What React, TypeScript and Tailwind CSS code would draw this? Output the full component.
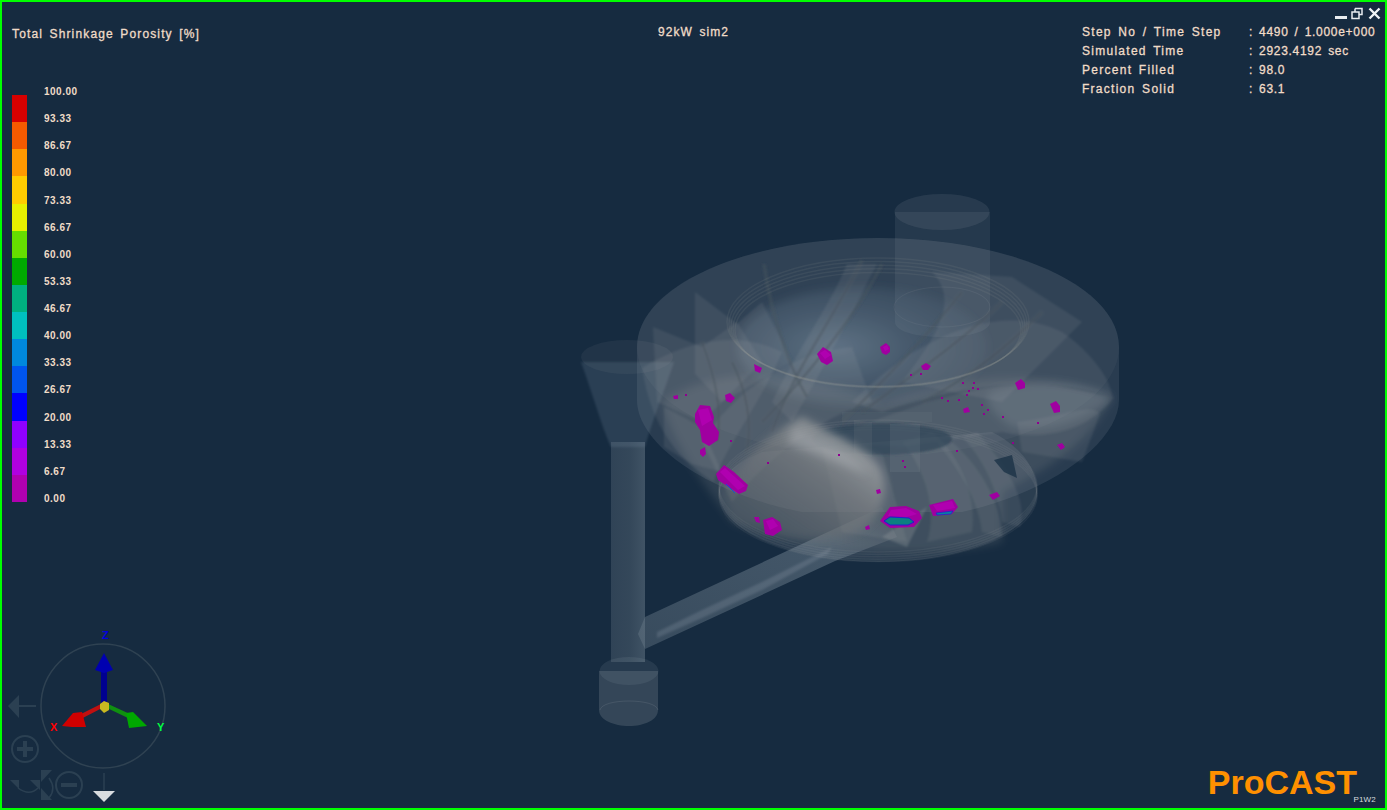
const legend = [
  { value: '100.00', color: '#d70000' },
  { value: '93.33', color: '#f55a00' },
  { value: '86.67', color: '#ff9900' },
  { value: '80.00', color: '#ffcc00' },
  { value: '73.33', color: '#e6f000' },
  { value: '66.67', color: '#66dd00' },
  { value: '60.00', color: '#00aa00' },
  { value: '53.33', color: '#00b080' },
  { value: '46.67', color: '#00bfbf' },
  { value: '40.00', color: '#0088dd' },
  { value: '33.33', color: '#0055ee' },
  { value: '26.67', color: '#0000ff' },
  { value: '20.00', color: '#9000ff' },
  { value: '13.33', color: '#b000e0' },
  { value: '6.67', color: '#b000b0' },
  { value: '0.00', color: '' },
];

const info = [
  ['Step No / Time Step', ': 4490 / 1.000e+000'],
  ['Simulated Time', ': 2923.4192 sec'],
  ['Percent Filled', ': 98.0'],
  ['Fraction Solid', ': 63.1'],
];

// swept blades of the runner, drawn see-through over each other
const blades = [
  'M651 325 L700 345 L735 320 L760 360 L700 420 L655 400 Z',
  'M693 290 L735 322 L760 300 L790 360 L720 400 L693 372 Z',
  'M640 366 C690 335 740 330 780 350 C760 400 720 450 712 480 C680 460 650 430 640 366 Z',
  'M662 405 L700 425 L720 470 L690 462 L662 445 Z',
  'M845 262 C830 300 800 340 770 400 L790 420 C820 370 850 310 875 262 Z',
  'M930 270 C960 300 930 340 900 380 L1000 400 L1080 320 L1010 275 Z',
  'M850 400 C920 330 1000 300 1060 330 C1090 350 1110 380 1110 395 C1040 370 950 385 880 410 Z',
  'M820 440 C870 420 980 370 1060 385 L1112 395 C1090 425 1050 440 1000 430 L900 445 Z',
  'M1015 420 C1060 415 1090 400 1098 412 L1080 460 L1020 450 Z',
  'M900 440 C925 470 935 510 925 540 L970 530 C975 490 955 450 930 430 Z',
  'M950 440 C985 470 1000 510 1000 535 L980 530 C975 490 950 460 935 440 Z',
  'M975 430 C1010 470 1025 500 1018 525 L1000 520 C995 480 975 450 960 435 Z',
  'M820 445 L880 450 L905 540 L840 530 Z',
  'M700 440 C730 390 790 350 850 345 L870 400 C830 410 770 450 730 500 Z',
];

const vanes = [
  'M880 262 C850 320 800 380 760 420',
  'M860 258 C830 320 790 370 770 430',
  'M762 262 C770 320 790 370 805 395',
  'M730 360 C745 390 750 420 745 450',
  'M700 340 C715 380 720 410 715 440',
  'M960 290 C920 340 880 380 840 420',
  'M1040 310 C1000 350 960 380 920 400',
  'M1000 300 C960 340 900 380 860 410',
];

const blobs = [
  { d: 'M815 352 L821 345 L829 350 L831 359 L825 363 L819 360 Z', light: 'M818 351 L823 348 L829 353 L823 357 Z' },
  { d: 'M878 345 L884 341 L888 345 L888 350 L884 353 L880 351 Z', light: 'M881 345 L885 343 L887 347 L883 349 Z' },
  { d: 'M919 364 L924 361 L929 364 L926 368 L921 368 Z', light: '' },
  { d: 'M1013 381 L1019 377 L1023 381 L1023 386 L1016 388 Z', light: '' },
  { d: 'M1048 402 L1054 399 L1058 404 L1058 410 L1052 411 Z', light: '' },
  { d: 'M1055 443 L1060 441 L1063 445 L1059 448 Z', light: '' },
  { d: 'M987 493 L995 490 L998 494 L991 498 Z', light: '' },
  { d: 'M693 412 L698 403 L708 404 L712 415 L711 421 L717 430 L716 438 L707 444 L700 440 L698 428 L693 420 Z', light: 'M696 408 L706 406 L710 418 L700 424 Z' },
  { d: 'M698 448 L703 445 L704 452 L701 455 L698 452 Z', light: '' },
  { d: 'M714 472 L722 463 L732 470 L746 483 L744 489 L737 492 L728 486 L716 478 Z', light: 'M718 470 L723 466 L743 484 L736 488 Z' },
  { d: 'M761 518 L770 515 L778 520 L780 528 L771 534 L763 532 Z', light: 'M764 519 L771 517 L776 524 L768 528 Z' },
  { d: 'M752 515 L757 515 L758 521 L754 520 Z', light: '' },
  { d: 'M878 519 L888 505 L904 504 L917 509 L920 516 L912 525 L888 526 Z', light: 'M889 508 L904 506 L915 512 L905 515 L886 514 Z' },
  { d: 'M927 503 L951 497 L956 505 L950 512 L931 514 Z', light: 'M931 503 L950 499 L953 506 L935 509 Z' },
  { d: 'M723 393 L728 391 L733 396 L729 401 L724 399 Z', light: '' },
  { d: 'M671 394 L676 393 L676 397 L672 397 Z', light: '' },
  { d: 'M874 488 L878 487 L879 491 L875 492 Z', light: '' },
  { d: 'M863 525 L867 523 L868 527 L864 528 Z', light: '' },
  { d: 'M752 362 L760 366 L758 371 L753 369 Z', light: '' },
  { d: 'M961 407 L966 405 L968 410 L962 411 Z', light: '' },
];

const dots = [
  [683, 392], [728, 438], [765, 460], [836, 452], [900, 458], [902, 464], [954, 448], [964, 392], [970, 385],
  [960, 380], [975, 386], [908, 372], [918, 371], [939, 395], [956, 397], [981, 411], [985, 407], [979, 402],
  [1000, 414], [971, 380], [966, 388], [1010, 440], [1035, 420], [945, 398],
];

const rings = [0, 4, 8, 12, 16];

function Scene() {
  return (
    <svg className="absolute inset-0" width={1387} height={810} viewBox="0 0 1387 810">
      <defs>
        <filter id="soft" x="-20%" y="-20%" width="140%" height="140%">
          <feGaussianBlur stdDeviation="4" />
        </filter>
        <filter id="softer" x="-20%" y="-20%" width="140%" height="140%">
          <feGaussianBlur stdDeviation="1" />
        </filter>
        <radialGradient id="bowl" cx="40%" cy="50%" r="60%">
          <stop offset="0%" stopColor="#8ea2b4" stopOpacity="0.5" />
          <stop offset="100%" stopColor="#5c7184" stopOpacity="0.15" />
        </radialGradient>
        <linearGradient id="swoosh" x1="0.75" y1="0.1" x2="0.1" y2="0.8">
          <stop offset="0%" stopColor="#a4a8aa" stopOpacity="0.85" />
          <stop offset="40%" stopColor="#7d8083" stopOpacity="0.65" />
          <stop offset="100%" stopColor="#6a6e70" stopOpacity="0.25" />
        </linearGradient>
        <linearGradient id="runner" x1="0" y1="1" x2="1" y2="0">
          <stop offset="0%" stopColor="#6a7b89" stopOpacity="0.4" />
          <stop offset="70%" stopColor="#7b8c9a" stopOpacity="0.45" />
          <stop offset="100%" stopColor="#8a9298" stopOpacity="0" />
        </linearGradient>
        <linearGradient id="sprue" x1="0" y1="0" x2="1" y2="0">
          <stop offset="0%" stopColor="#6c7c8a" stopOpacity="0.3" />
          <stop offset="55%" stopColor="#6c7c8a" stopOpacity="0.35" />
          <stop offset="100%" stopColor="#7a8b98" stopOpacity="0.42" />
        </linearGradient>
      </defs>

      {/* sprue, well and funnel */}
      <path d="M609 440 L643 440 L643 660 L609 660 Z" fill="url(#sprue)" />
      <path d="M579 360 C590 390 600 425 609 445 L643 445 C650 420 660 395 672 360 Z" fill="#7f93a5" fillOpacity="0.2" filter="url(#softer)" />
      <ellipse cx={625} cy={355} rx={46} ry={17} fill="#a0a8ac" fillOpacity="0.08" />
      <path d="M597 669 L597 708 C597 718 612 724 627 724 C642 724 656 718 656 708 L656 669 Z" fill="#8a969f" fillOpacity="0.26" />
      <ellipse cx={627} cy={669} rx={29.5} ry={14} fill="#a0aeb8" fillOpacity="0.12" />
      <path d="M598 708 C600 696 654 696 656 708" fill="none" stroke="#8c98a2" strokeOpacity="0.2" />

      {/* runner bar */}
      <path d="M643 615 L787 548 L880 505 L895 535 L833 559 L643 647 L636 632 Z" fill="url(#runner)" />
      <path d="M655 630 L700 608 L760 580 L830 545 L826 552 L760 588 L700 616 L655 636 Z" fill="#a3b1bc" fillOpacity="0.2" filter="url(#softer)" />

      {/* casing */}
      <path d="M635 345 C635 284 743 236 876 236 C1009 236 1117 284 1117 345 L1117 398 C1117 440 1050 490 960 510 L800 510 C700 490 635 440 635 398 Z" fill="#b6bec4" fillOpacity="0.12" />
      <ellipse cx={876} cy={345} rx={241} ry={109} fill="#c0c5c8" fillOpacity="0.05" />
      <ellipse cx={940} cy={210} rx={47.5} ry={18} fill="#a8b0b6" fillOpacity="0.12" />
      <path d="M893 210 L893 320 C893 340 988 340 988 320 L988 210 Z" fill="#a8b0b6" fillOpacity="0.11" />
      <ellipse cx={940} cy={305} rx={48} ry={20} fill="none" stroke="#b0b4b4" strokeOpacity="0.1" />

      {/* inner bowl */}
      <ellipse cx={860} cy={345} rx={125} ry={60} fill="url(#bowl)" filter="url(#soft)" />

      {/* grey wash of the swept surfaces */}
      <path d="M660 400 C720 360 800 370 880 400 C960 370 1050 370 1110 395 C1090 440 1040 470 1000 490 L1000 540 C950 555 800 555 730 520 C700 480 670 440 660 400 Z" fill="#a8a8a4" fillOpacity="0.16" filter="url(#soft)" />

      <g filter="url(#softer)">
        {blades.map((d, i) => (
          <path key={i} d={d} fill="#bdbdb6" fillOpacity={0.1} />
        ))}
        {vanes.map((d, i) => (
          <path key={i} d={d} fill="none" stroke="#4b5660" strokeOpacity={0.42} strokeWidth={3.5} />
        ))}
      </g>

      {/* right hand blade */}
      <path d="M985 392 C1020 375 1080 378 1110 395 C1090 415 1050 432 1010 425 C995 415 985 405 985 392 Z" fill="#9aa5ab" fillOpacity="0.22" filter="url(#soft)" />

      {/* upper rings */}
      {rings.map((o) => (
        <ellipse key={o} cx={876} cy={320 + o * 0.5} rx={151 - o * 0.5} ry={64 - o * 0.4} fill="none" stroke="#b4b2aa" strokeOpacity={0.09} strokeWidth={1.5} />
      ))}

      {/* lower shroud */}
      <path d="M717 490 C717 530 790 560 876 560 C962 560 1035 530 1035 490 C1035 460 1010 440 990 430 L760 450 C735 460 717 475 717 490 Z" fill="#9aa4aa" fillOpacity="0.16" />
      {rings.map((o) => (
        <ellipse key={o} cx={876} cy={484 + o * 0.6} rx={159} ry={66} fill="none" stroke="#b4b8b8" strokeOpacity={0.08} strokeWidth={1.5} />
      ))}

      {/* throat */}
      <ellipse cx={880} cy={437} rx={70} ry={16} fill="#2d4154" fillOpacity="0.65" filter="url(#softer)" />
      <path d="M840 410 L930 410 L930 420 L840 420 Z" fill="#9aa0a0" fillOpacity="0.08" />
      <path d="M852 418 L870 420 L870 455 L852 452 Z" fill="#9aa0a0" fillOpacity="0.1" />
      <path d="M888 422 L918 422 L918 470 L888 470 Z" fill="#9aa8b0" fillOpacity="0.12" />

      {/* bright hub surface */}
      <path d="M722 492 C735 458 770 430 800 415 C825 430 865 445 878 466 C890 490 880 520 850 532 C810 542 765 535 730 516 Z" fill="url(#swoosh)" filter="url(#soft)" />
      <path d="M792 425 C815 435 850 450 866 472 C845 465 815 452 785 442 Z" fill="#c6cbcd" fillOpacity="0.3" filter="url(#soft)" />
      <path d="M880 535 L925 505 L905 545 Z" fill="#a4aaad" fillOpacity="0.25" filter="url(#softer)" />

      {/* open window at the right */}
      <path d="M992 458 L1010 453 L1015 476 L1002 470 Z" fill="#1f3549" fillOpacity="0.85" />

      {blobs.map((b, i) => (
        <g key={i}>
          <path d={b.d} fill="#a000a0" />
          {b.light && <path d={b.light} fill="#b000b0" />}
        </g>
      ))}
      {dots.map(([x, y], i) => (
        <rect key={i} x={x} y={y} width={2} height={2} fill="#900090" />
      ))}

      {/* hot spots inside the large defects */}
      <path d="M882 519 L888 515 L907 516 L912 520 L906 523 L888 523 Z" fill="#0b8080" stroke="#2020d0" />
      <path d="M934 511 L951 509 L949 512 L935 513 Z" fill="#0a80a0" stroke="#2020d0" strokeWidth={0.7} />
      <path d="M724 482 L733 491" stroke="#1a50d0" strokeWidth={1} />
    </svg>
  );
}

function Gizmo() {
  return (
    <svg width={190} height={188} viewBox="0 0 190 188" className="block">
      <circle cx={101} cy={86} r={62} fill="none" stroke="#2f4252" strokeWidth={1.5} />
      <g fontFamily='"Liberation Sans", sans-serif' fontSize={11} fontWeight={700}>
        <text x={100} y={19} fill="#0000e0">Z</text>
        <text x={48} y={111} fill="#ff0000">X</text>
        <text x={155} y={111} fill="#00ff40">Y</text>
      </g>

      {/* axes */}
      <path d="M99 50 L105 50 L105 84 L99 84 Z" fill="#000090" />
      <path d="M102 33 L111 50 L102 53 L93 50 Z" fill="#0000b0" />
      <path d="M101 83 L102 87 L75 101 L73 97 Z" fill="#c01010" />
      <path d="M60 106 L71 93 L80 92 L84 107 L70 107 Z" fill="#d00000" />
      <path d="M104 83 L103 87 L128 99 L130 95 Z" fill="#109010" />
      <path d="M145 106 L131 92 L124 93 L127 108 Z" fill="#00a800" />
      <path d="M98 84 L102 81 L107 83 L107 90 L102 93 L98 89 Z" fill="#c8b820" />

      {/* view controls */}
      <g stroke="#2b4052" fill="none" strokeWidth={2}>
        <path d="M16 86 L34 86" />
        <circle cx={23} cy={129} r={13} />
        <path d="M23 121 L23 137 M15 129 L31 129" strokeWidth={4} />
        <circle cx={67} cy={165} r={13} />
        <path d="M59 165 L75 165" strokeWidth={4} />
        <path d="M16 168 C24 174 30 174 36 168" strokeWidth={1.5} />
        <path d="M47 158 C52 165 52 172 47 178" strokeWidth={1.5} />
        <path d="M102 153 L102 170" strokeWidth={1.5} />
      </g>
      <g fill="#2b4052">
        <path d="M6 86 L17 75 L17 98 Z" />
        <path d="M8 160 L17 160 L17 169 Z" />
        <path d="M38 160 L28 160 L38 170 Z" />
        <path d="M39 150 L39 162 L50 150 Z" />
        <path d="M39 168 L39 180 L50 180 Z" />
      </g>
      <path d="M91 171 L113 171 L102 182 Z" fill="#d8dcdf" />
    </svg>
  );
}

export default function App() {
  return (
    <div
      className="relative flex h-[810px] w-[1387px] flex-col justify-between overflow-hidden border-2 border-[#00ff00] bg-[#162b40] text-[#f0dcc8]"
      style={{ fontFamily: '"Liberation Sans", Arial, sans-serif' }}
    >
      <Scene />

      {/* window buttons */}
      <div className="absolute right-[4px] top-[4px] flex items-start gap-[5px]">
        <div className="mt-[10px] h-[3px] w-[12px] bg-[#e8ecef]" />
        <svg width={12} height={13} viewBox="0 0 12 13" className="-ml-[1px] mt-[1px]">
          <path d="M4 1.5 H11 V7.5 H8 M1 5 H8 V11.5 H1 Z M4 5 V1.5" fill="none" stroke="#e8ecef" strokeWidth={1.5} />
        </svg>
        <svg width={13} height={13} viewBox="0 0 13 13" className="mt-[1px]">
          <path d="M1.5 1.5 L11.5 11.5 M11.5 1.5 L1.5 11.5" stroke="#f0f3f5" strokeWidth={2.4} />
        </svg>
      </div>

      <div className="relative grid grid-cols-[1fr_auto_1fr] items-start pt-[23px] [-webkit-text-stroke:0.3px]">
        <div className="pl-[10px]">
          <div className="mt-[1px] text-[12px] leading-[16px] tracking-[1.14px] [word-spacing:2px]">
            Total Shrinkage Porosity [%]
          </div>
          <div className="mt-[36px] flex gap-[17px] [-webkit-text-stroke:0]">
            <div className="mt-[17px] flex w-[15px] flex-col">
              {legend.slice(0, 15).map((l) => (
                <div key={l.value} className="h-[27.13px]" style={{ backgroundColor: l.color }} />
              ))}
            </div>
            <div className="flex flex-col">
              {legend.map((l) => (
                <div key={l.value} className="h-[27.13px] text-[10px] font-bold leading-[27px] tracking-[0.5px]">
                  {l.value}
                </div>
              ))}
            </div>
          </div>
        </div>

        <div className="-mt-[1px] text-[12px] leading-[16px] tracking-[1.1px] [word-spacing:2px]">92kW sim2</div>

        <div className="ml-auto grid grid-cols-[167px_126px] pr-[10px] text-[12px] leading-[19px] [word-spacing:2px] -mt-[2px]">
          {info.map(([label, value]) => (
            <div key={label} className="contents">
              <div className="tracking-[1.27px]">{label}</div>
              <div className="whitespace-nowrap tracking-[0.7px]">{value}</div>
            </div>
          ))}
        </div>
      </div>

      <div className="relative flex items-end justify-between">
        <Gizmo />
        <div className="relative mb-[13px] mr-[28px] text-[34px] font-bold leading-[26px] text-[#ff9000]">
          ProCAST
          <span className="absolute -right-[19px] top-[26px] text-[8px] font-normal leading-[9px] tracking-[0.2px] text-[#d8dcdf]">P1W2</span>
        </div>
      </div>
    </div>
  );
}
